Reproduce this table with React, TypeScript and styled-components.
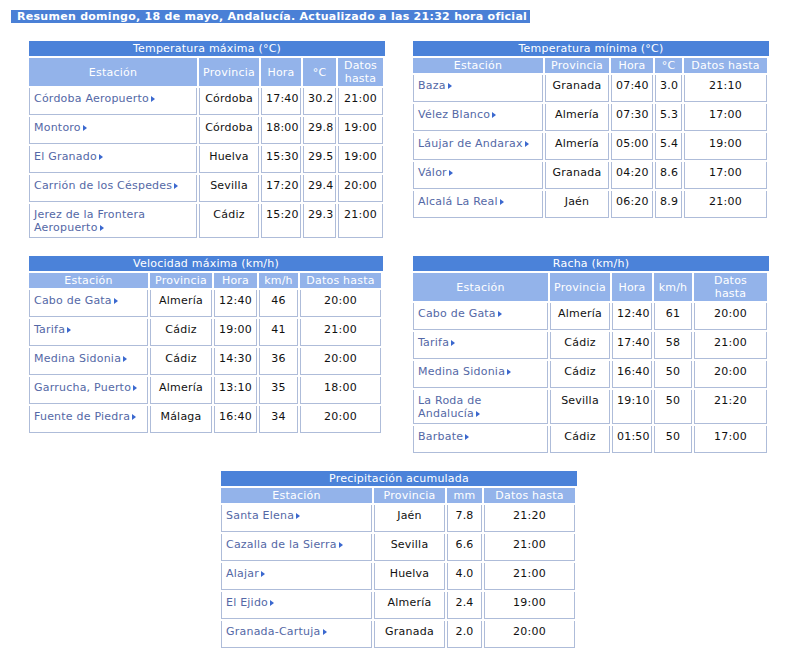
import styled, { createGlobalStyle } from "styled-components";

const GlobalStyle = createGlobalStyle`
  body {
    margin: 0;
    background: #ffffff;
    font-family: "DejaVu Sans", Verdana, sans-serif;
    font-size: 11px;
    letter-spacing: 0.22px;
    color: #111111;
  }
`;

const Page = styled.main`
  padding: 10px 0 20px 0;
`;

const Banner = styled.div`
  display: inline-block;
  margin-left: 11px;
  padding: 0 3px 0 6px;
  background: #4a80d6;
  color: #ffffff;
  font-weight: bold;
  letter-spacing: 0.28px;
  line-height: 13px;
`;

const Board = styled.div`
  display: grid;
  grid-template-columns: 356px 356px;
  column-gap: 28px;
  row-gap: 18px;
  align-items: start;
  margin: 18px 0 0 29px;
`;

const Panel = styled.section<{ $wide?: boolean }>`
  width: fit-content;
  ${(p) => (p.$wide ? "grid-column: 1 / span 2; justify-self: center;" : "")}
`;

const Title = styled.div`
  background: #4b82d9;
  color: #ffffff;
  text-align: center;
  line-height: 15px;
  height: 15px;
`;

const Grid = styled.div<{ $cols: string }>`
  display: grid;
  grid-template-columns: ${(p) => p.$cols};
  gap: 2px;
  margin-top: 2px;
  padding-right: 2px;
`;

const Head = styled.div`
  box-sizing: border-box;
  display: flex;
  align-items: center;
  justify-content: center;
  min-height: 15px;
  padding: 1px 2px;
  background: #93b3ea;
  color: #ffffff;
  text-align: center;
  line-height: 13px;
  white-space: pre-line;
`;

const Cell = styled.div<{ $left?: boolean }>`
  box-sizing: border-box;
  min-height: 27px;
  padding: 4px 4px 3px 4px;
  border: 1px solid #aebcd9;
  border-top: none;
  line-height: 13px;
  text-align: ${(p) => (p.$left ? "left" : "center")};
  white-space: pre-line;
`;

const Station = styled.a`
  color: #5468a6;
  text-decoration: none;
`;

const Arrow = styled.span`
  display: inline-block;
  width: 0;
  height: 0;
  margin-left: 2px;
  border-left: 4px solid #3b68cf;
  border-top: 3.5px solid transparent;
  border-bottom: 3.5px solid transparent;
  vertical-align: 0px;
`;

type Table = {
  title: string;
  heads: string[];
  widths: number[];
  rows: string[][];
  wide?: boolean;
};

const tables: Table[] = [
  {
    title: "Temperatura máxima (°C)",
    heads: ["Estación", "Provincia", "Hora", "°C", "Datos\nhasta"],
    widths: [168, 60, 40, 33, 45],
    rows: [
      ["Córdoba Aeropuerto", "Córdoba", "17:40", "30.2", "21:00"],
      ["Montoro", "Córdoba", "18:00", "29.8", "19:00"],
      ["El Granado", "Huelva", "15:30", "29.5", "19:00"],
      ["Carrión de los Céspedes", "Sevilla", "17:20", "29.4", "20:00"],
      ["Jerez de la Frontera\nAeropuerto", "Cádiz", "15:20", "29.3", "21:00"],
    ],
  },
  {
    title: "Temperatura mínima (°C)",
    heads: ["Estación", "Provincia", "Hora", "°C", "Datos hasta"],
    widths: [130, 64, 42, 27, 83],
    rows: [
      ["Baza", "Granada", "07:40", "3.0", "21:10"],
      ["Vélez Blanco", "Almería", "07:30", "5.3", "17:00"],
      ["Láujar de Andarax", "Almería", "05:00", "5.4", "19:00"],
      ["Válor", "Granada", "04:20", "8.6", "17:00"],
      ["Alcalá La Real", "Jaén", "06:20", "8.9", "21:00"],
    ],
  },
  {
    title: "Velocidad máxima (km/h)",
    heads: ["Estación", "Provincia", "Hora", "km/h", "Datos hasta"],
    widths: [119, 62, 43, 39, 81],
    rows: [
      ["Cabo de Gata", "Almería", "12:40", "46", "20:00"],
      ["Tarifa", "Cádiz", "19:00", "41", "21:00"],
      ["Medina Sidonia", "Cádiz", "14:30", "36", "20:00"],
      ["Garrucha, Puerto", "Almería", "13:10", "35", "18:00"],
      ["Fuente de Piedra", "Málaga", "16:40", "34", "20:00"],
    ],
  },
  {
    title: "Racha (km/h)",
    heads: ["Estación", "Provincia", "Hora", "km/h", "Datos\nhasta"],
    widths: [135, 60, 40, 38, 73],
    rows: [
      ["Cabo de Gata", "Almería", "12:40", "61", "20:00"],
      ["Tarifa", "Cádiz", "17:40", "58", "21:00"],
      ["Medina Sidonia", "Cádiz", "16:40", "50", "20:00"],
      ["La Roda de\nAndalucía", "Sevilla", "19:10", "50", "21:20"],
      ["Barbate", "Cádiz", "01:50", "50", "17:00"],
    ],
  },
  {
    title: "Precipitación acumulada",
    heads: ["Estación", "Provincia", "mm", "Datos hasta"],
    widths: [151, 71, 35, 91],
    rows: [
      ["Santa Elena", "Jaén", "7.8", "21:20"],
      ["Cazalla de la Sierra", "Sevilla", "6.6", "21:00"],
      ["Alajar", "Huelva", "4.0", "21:00"],
      ["El Ejido", "Almería", "2.4", "19:00"],
      ["Granada-Cartuja", "Granada", "2.0", "20:00"],
    ],
    wide: true,
  },
];

function Summary({ table }: { table: Table }) {
  return (
    <Panel $wide={table.wide}>
      <Title>{table.title}</Title>
      <Grid $cols={table.widths.map((w) => w + "px").join(" ")}>
        {table.heads.map((h) => (
          <Head key={h}>{h}</Head>
        ))}
        {table.rows.map((row, i) =>
          row.map((value, j) =>
            j === 0 ? (
              <Cell key={i + "-" + j} $left>
                <Station href="#">
                  {value}
                  <Arrow />
                </Station>
              </Cell>
            ) : (
              <Cell key={i + "-" + j}>{value}</Cell>
            )
          )
        )}
      </Grid>
    </Panel>
  );
}

function App() {
  return (
    <Page>
      <GlobalStyle />
      <Banner>
        Resumen domingo, 18 de mayo, Andalucía. Actualizado a las 21:32 hora oficial
      </Banner>
      <Board>
        {tables.map((t) => (
          <Summary key={t.title} table={t} />
        ))}
      </Board>
    </Page>
  );
}

export default App;
